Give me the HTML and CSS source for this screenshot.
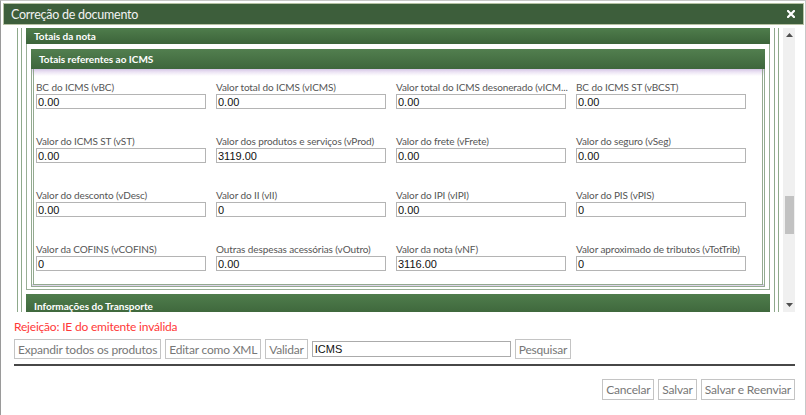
FILE: index.html
```html
<!DOCTYPE html>
<html lang="pt">
<head>
<meta charset="utf-8">
<title>Correção de documento</title>
<link rel="stylesheet" href="styles.css">
</head>
<body>
<div class="dialog">
  <div class="titlebar">
    <span class="title">Correção de documento</span>
    <svg class="close" width="8" height="8" viewBox="0 0 8 8"><path d="M1 1 L7 7 M7 1 L1 7" stroke="#fff" stroke-width="2.2" stroke-linecap="square"/></svg>
  </div>
  <div class="body">
    <div class="scroll">
      <div class="viewport">
        <div class="frame-a"><div class="frame-b">
          <div class="section">
            <div class="sec-head">Totais da nota</div>
            <div class="sec-body">
              <div class="sub">
                <div class="sub-head">Totais referentes ao ICMS</div>
                <div class="sub-body">
                  <div class="fields">
                    <div class="field"><label>BC do ICMS (vBC)</label><input value="0.00"></div>
                    <div class="field"><label>Valor total do ICMS (vICMS)</label><input value="0.00"></div>
                    <div class="field"><label>Valor total do ICMS desonerado (vICM...</label><input value="0.00"></div>
                    <div class="field"><label>BC do ICMS ST (vBCST)</label><input value="0.00"></div>
                    <div class="field"><label>Valor do ICMS ST (vST)</label><input value="0.00"></div>
                    <div class="field"><label>Valor dos produtos e serviços (vProd)</label><input value="3119.00"></div>
                    <div class="field"><label>Valor do frete (vFrete)</label><input value="0.00"></div>
                    <div class="field"><label>Valor do seguro (vSeg)</label><input value="0.00"></div>
                    <div class="field"><label>Valor do desconto (vDesc)</label><input value="0.00"></div>
                    <div class="field"><label>Valor do II (vII)</label><input value="0"></div>
                    <div class="field"><label>Valor do IPI (vIPI)</label><input value="0.00"></div>
                    <div class="field"><label>Valor do PIS (vPIS)</label><input value="0"></div>
                    <div class="field"><label>Valor da COFINS (vCOFINS)</label><input value="0"></div>
                    <div class="field"><label>Outras despesas acessórias (vOutro)</label><input value="0.00"></div>
                    <div class="field"><label>Valor da nota (vNF)</label><input value="3116.00"></div>
                    <div class="field"><label>Valor aproximado de tributos (vTotTrib)</label><input value="0"></div>
                  </div>
                </div>
              </div>
            </div>
          </div>
          <div class="section section-next">
            <div class="sec-head sec-head-tall">Informações do Transporte</div>
          </div>
        </div></div>
      </div>
      <div class="scrollbar">
        <div class="arrow"><svg width="7" height="4" viewBox="0 0 7 4"><path d="M3.5 0 L7 4 L0 4 Z" fill="#505050"/></svg></div>
        <div class="track-top"></div>
        <div class="thumb"></div>
        <div class="track-bottom"></div>
        <div class="arrow"><svg width="7" height="4" viewBox="0 0 7 4"><path d="M0 0 L7 0 L3.5 4 Z" fill="#505050"/></svg></div>
      </div>
    </div>
    <div class="error">Rejeição: IE do emitente inválida</div>
    <div class="toolbar">
      <button class="btn">Expandir todos os produtos</button>
      <button class="btn">Editar como XML</button>
      <button class="btn">Validar</button>
      <input class="search" value="ICMS">
      <button class="btn">Pesquisar</button>
    </div>
    <div class="divider"></div>
    <div class="actions">
      <button class="btn btn-lg">Cancelar</button>
      <button class="btn btn-lg">Salvar</button>
      <button class="btn btn-lg">Salvar e Reenviar</button>
    </div>
  </div>
</div>
</body>
</html>
```

FILE: styles.css
```css
* { box-sizing: border-box; }
html, body { margin: 0; padding: 0; background: #fff; }
body { font-family: Lato, "Open Sans", sans-serif; overflow: hidden; }

.dialog {
  width: 806px;
  height: 430px;
  border-left: 1px solid #9a9a9a;
  border-top: 1px solid #c8c8c8;
  border-right: 1px solid #c8c8c8;
  background: #fff;
}

.titlebar {
  margin: 2px 1px 2px 2px;
  height: 22px;
  background: #3d5e3b;
  border: 1px solid #b7c2a4;
  display: flex;
  align-items: center;
  justify-content: space-between;
  padding: 0 8px 0 7px;
}
.title { color: #f2f2f2; font-size: 12.5px; letter-spacing: -0.25px; }
.close { display: block; }

.body { padding: 0 10px 0 13px; }

.scroll {
  margin-top: 3px;
  height: 284px;
  display: flex;
}
.viewport {
  flex: 1;
  overflow: hidden;
  padding: 0 4px 0 3px;
}
.frame-a {
  border-left: 1px solid #8ea98b;
  border-right: 1px solid #8ea98b;
  padding: 0 3px;
  height: 100%;
}
.frame-b {
  border-left: 1px solid #8ea98b;
  border-right: 1px solid #8ea98b;
  padding: 0 4px;
  height: 100%;
}

.sec-head {
  height: 16px;
  background: linear-gradient(#4f7d4c, #3c643a);
  color: #fff;
  font-weight: 700;
  font-size: 10px;
  line-height: 16px;
  padding-left: 8px;
}
.sec-head-tall { height: 22px; line-height: 24px; }
.sec-body {
  border: 1px solid #98ae95;
  border-top: none;
  padding: 5px 4px 2px;
}
.section-next { margin-top: 4px; }

.sub-head {
  height: 20px;
  background: linear-gradient(#527f4f, #3e663c);
  color: #fff;
  font-weight: 700;
  font-size: 10px;
  line-height: 21px;
  padding-left: 8px;
}
.sub-body {
  border: 3px double #93aa90;
  border-top: none;
  background: linear-gradient(#d4c5e5 0, #ece4f4 3px, #fff 7px);
  padding: 12px 0 13px 2px;
}

.fields {
  display: grid;
  grid-template-columns: repeat(4, 170px);
  column-gap: 10px;
  row-gap: 26px;
}
.field { display: flex; flex-direction: column; }
.field label {
  font-size: 10px;
  line-height: 12px;
  color: #555;
  white-space: nowrap;
  letter-spacing: -0.1px;
}
.field input {
  margin-top: 1px;
  height: 15px;
  width: 170px;
  border: 1px solid #b4b4b4;
  padding: 0 1px;
  font-family: "Liberation Sans", Arial, sans-serif;
  font-size: 11px;
  color: #111;
  background: #fff;
  outline: none;
}

.scrollbar {
  width: 12px;
  background: #f0f0f0;
  display: flex;
  flex-direction: column;
  align-items: center;
}
.arrow { height: 14px; display: flex; align-items: center; justify-content: center; }
.arrow svg { display: block; }
.track-top { height: 154px; }
.thumb { width: 9px; height: 38px; background: #c2c2c2; }
.track-bottom { flex: 1; }

.error {
  color: #ff3838;
  font-size: 12px;
  line-height: 16px;
  margin-top: 7px;
  letter-spacing: -0.2px;
}

.toolbar {
  margin-top: 4px;
  display: flex;
  align-items: center;
  gap: 4px;
  height: 20px;
}
.btn {
  font-family: Lato, "Open Sans", sans-serif;
  font-size: 12px;
  letter-spacing: -0.2px;
  color: #777;
  background: #fff;
  border: 1px solid #c4c4c4;
  height: 20px;
  padding: 0 3px;
  line-height: 17px;
  border-radius: 0;
}
.search {
  width: 199px;
  height: 16px;
  border: 1px solid #ababab;
  font-family: "Liberation Sans", Arial, sans-serif;
  font-size: 11px;
  color: #111;
  padding: 0 2px;
  outline: none;
}

.divider {
  margin-top: 5px;
  border-top: 2px solid #474747;
}

.actions {
  margin-top: 13px;
  display: flex;
  justify-content: flex-end;
  gap: 4px;
}
.btn-lg { height: 21px; }
```
